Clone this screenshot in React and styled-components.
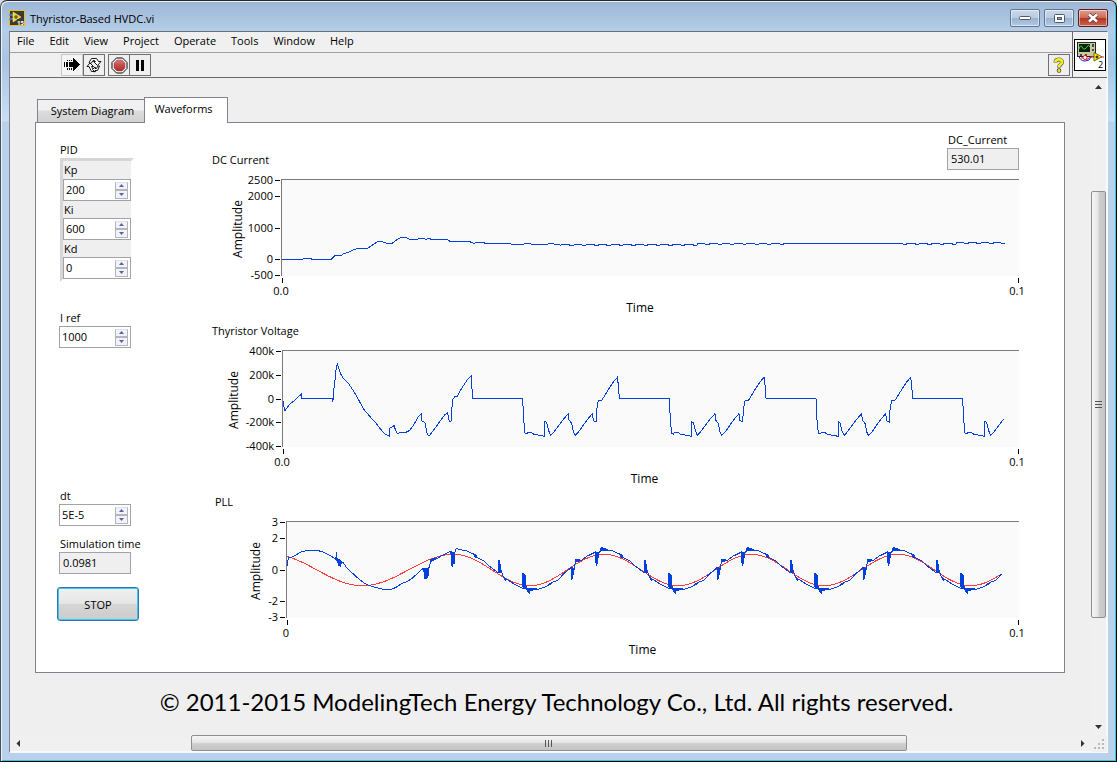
import React, { useState } from 'react';
import styled, { createGlobalStyle } from 'styled-components';

const GlobalStyle = createGlobalStyle`
  * {
    box-sizing: border-box;
  }

  body {
    margin: 0;
    background: #d5dbe2;
    color: #000;
    font-family: 'Open Sans', 'Noto Sans', sans-serif;
    font-size: 11px;
    line-height: 17px;
  }

  button, input {
    font: inherit;
    color: inherit;
    margin: 0;
    padding: 0;
  }
`;

const Window = styled.div`
  display: flex;
  flex-direction: column;
  min-height: 100vh;
  padding: 0 8px 8px;
  border: 1px solid #000;
  border-left-color: #4a5058;
  border-top-color: #23282e;
  border-radius: 7px 7px 0 0;
  background: linear-gradient(#9db6d4, #b4cde8 30px, #a9c4e2 60px, #c9dff5 120px, #b9d1ea 121px);
  box-shadow: inset 1px 1px 0 #eaf3fb, inset -1px -1px 0 #2fc9e4;
`;

const TitleBar = styled.header`
  display: flex;
  align-items: center;
  gap: 4px;
  height: 30px;
  padding-top: 4px;
`;

const Title = styled.h1`
  flex: 1;
  margin: 0;
  padding-left: 1px;
  font-size: 11px;
  font-weight: 400;
`;

const Caption = styled.button`
  display: flex;
  align-items: center;
  justify-content: center;
  width: 30px;
  height: 18px;
  border: 1px solid ${ props => props.$close ? '#5b1f22' : '#5f7590' };
  border-radius: 2px;
  box-shadow: inset 0 0 0 1px rgba(255, 255, 255, .5);
  background: ${ props => props.$close
    ? 'linear-gradient(#dfa090, #cd6a58 48%, #b23421 50%, #c96450)'
    : 'linear-gradient(#c9d8ea, #b9cce2 48%, #98b1cf 50%, #b3cae4)' };
`;

const Client = styled.div`
  flex: 1;
  display: flex;
  flex-direction: column;
  border: 1px solid #f5f9fd;
  border-top-color: #6b6f76;
  border-left-color: #7d848e;
  background: #f0f0f0;
`;

const Header = styled.div`
  display: flex;
  border-bottom: 1px solid #696969;
`;

const Bars = styled.div`
  flex: 1;
`;

const MenuBar = styled.nav`
  display: flex;
  gap: 15px;
  height: 21px;
  padding-left: 7px;
  border-bottom: 1px solid #a0a0a0;
`;

const MenuLink = styled.a`
  color: #000;
  line-height: 18px;
  text-decoration: none;
`;

const Toolbar = styled.div`
  display: flex;
  align-items: center;
  height: 24px;
  padding: 0 2px 0 51px;
`;

const ToolButton = styled.button`
  display: flex;
  align-items: center;
  justify-content: center;
  width: 22px;
  height: 22px;
  margin-left: ${ props => props.$gap || '0' };
  border: 1px solid ${ props => props.$flat ? '#c8c8c8' : '#707070' };
  background: ${ props => props.$flat ? '#f4f4f4' : '#efefef' };

  & + & {
    border-left-color: #707070;
  }
`;

const ViIcon = styled.div`
  display: flex;
  align-items: center;
  justify-content: center;
  width: 35px;
  border-left: 1px solid #696969;
`;

const Body = styled.div`
  flex: 1;
  display: grid;
  grid-template-columns: minmax(0, 1fr) 16px;
  grid-template-rows: 1fr 17px;
`;

const Canvas = styled.main`
  padding: 19px 26px 10px 25px;
  background: #efefef;
`;

const Tabs = styled.div`
  display: flex;
  align-items: flex-end;
  padding-left: 2px;
`;

const Tab = styled.button`
  z-index: ${ props => props.$active ? 1 : 0 };
  height: ${ props => props.$active ? '26px' : '23px' };
  width: ${ props => props.$active ? '84px' : '108px' };
  margin-bottom: ${ props => props.$active ? '-1px' : '0' };
  margin-left: ${ props => props.$active ? '-1px' : '0' };
  padding: ${ props => props.$active ? '0 5px 4px 0' : '0 0 1px 3px' };
  border: 1px solid #82828c;
  border-bottom: 0;
  background: ${ props => props.$active ? '#fff' : 'linear-gradient(#f0f0f0 45%, #dcdcdc 50%, #d2d2d2)' };
`;

const Panel = styled.section`
  display: flex;
  border: 1px solid #82828c;
  padding: 8px 45px 8px 23px;
  background: #fff;
`;

const Controls = styled.div`
  display: flex;
  flex-direction: column;
  flex: 0 0 153px;
  align-items: flex-start;
  padding: 10px 0 43px;
`;

const Group = styled.div`
  display: flex;
  flex-direction: column;
  align-items: flex-start;
  margin-top: ${ props => props.$top || '0' };
`;

const Label = styled.label`
  height: 17px;
  padding-left: 1px;
`;

const Cluster = styled.fieldset`
  margin: 0;
  padding: 0;
  border: 0;

  legend {
    padding: 0 0 0 1px;
  }
`;

const ClusterFrame = styled.div`
  display: flex;
  flex-direction: column;
  width: 74px;
  margin-left: 1px;
  border: 3px solid #d6d6d8;
  border-right-color: transparent;
  border-bottom-color: transparent;
  background: #efefef padding-box;

  > label:first-child {
    height: 18px;
  }
`;

const Field = styled.div`
  display: flex;
  align-items: center;
  width: ${ props => props.$narrow ? '68px' : '72px' };
  height: 22px;
  padding: ${ props => props.$readOnly ? '0 2px 0 3px' : '0 2px' };
  border: 1px solid #a2a2ab;
  background: ${ props => props.$readOnly ? '#efefef' : '#fff' };

  input {
    flex: 1;
    min-width: 0;
    height: 18px;
    padding-bottom: 1px;
    border: 0;
    outline: 0;
    background: transparent;
  }
`;

const Spinner = styled.div`
  display: flex;
  flex-direction: column;

  button {
    display: flex;
    align-items: center;
    justify-content: center;
    width: 13px;
    height: 8px;
    border: 1px solid #b4b4bc;
    border-top-color: #e2e2e6;
    background: #f3f3f5;
  }

  button + button {
    height: 9px;
    border-color: #b4b4bc;
  }
`;

const StopButton = styled.button`
  width: 82px;
  height: 34px;
  margin: 13px 0 0 -2px;
  border: 1px solid #2c78a8;
  border-radius: 3px;
  box-shadow: inset 0 0 0 1px #41c5ee;
  background: linear-gradient(#f0f0f0, #e6e6e6 48%, #d6d6d6 50%, #cbcbcb);
`;

const Charts = styled.div`
  flex: 1;
  min-width: 0;
`;

const ChartHeader = styled.div`
  display: flex;
  align-items: flex-end;
  justify-content: space-between;
  margin-bottom: 9px;
  padding-left: ${ props => props.$indent || '0' };
`;

const ChartTitle = styled.h2`
  margin: 0;
  padding-bottom: 2px;
  font-size: 11px;
  font-weight: 400;
`;

const ChartArea = styled.div`
  height: 143px;
  padding-left: ${ props => props.$axis };

  > svg {
    display: block;
    width: 100%;
    height: 100%;
    overflow: visible;
  }
`;

const Copyright = styled.p`
  margin: 14px 0 0;
  padding-left: 13px;
  font-family: Lato, 'Open Sans', sans-serif;
  font-size: 24px;
  line-height: 30px;
  text-align: center;
  white-space: nowrap;
`;

const ScrollBar = styled.div`
  display: flex;
  flex-direction: ${ props => props.$vertical ? 'column' : 'row' };
  background: #f0f0f0;
  border-right: ${ props => props.$vertical ? '1px solid #fafafa' : '0' };
  border-bottom: ${ props => props.$vertical ? '0' : '1px solid #fafafa' };
`;

const ScrollButton = styled.button`
  display: flex;
  align-items: center;
  justify-content: center;
  flex: 0 0 17px;
  border: 0;
  background: transparent;
`;

const Track = styled.div`
  flex: ${ props => props.$size } 1 0;
`;

const Thumb = styled.div`
  display: flex;
  align-items: center;
  justify-content: center;
  flex: ${ props => props.$size } 1 0;
  border: 1px solid #8f8f8f;
  border-radius: 2px;
  background: linear-gradient(${ props => props.$vertical ? '90deg' : '180deg' }, #f6f6f6, #e6e6e6 45%, #cfcfcf 55%, #c4c4c6);
`;

const Grip = styled.div`
  display: flex;
  align-items: center;
  justify-content: center;
`;

// Traces are sampled at three units to the pixel.
const DC_START = [
  [246, 358], [308, 358], [312, 355], [333, 355], [335, 358], [394, 358], [404, 347], [424, 346],
  [430, 341], [448, 336], [462, 329], [475, 325], [503, 325], [520, 313], [532, 306], [544, 304],
  [562, 310], [578, 309], [595, 296], [605, 292], [615, 292], [630, 298], [652, 298], [658, 295],
  [672, 295], [678, 298], [684, 295], [695, 298], [740, 298], [750, 304], [806, 304], [823, 310],
  [830, 307], [850, 307], [855, 310], [930, 310], [934, 313], [970, 313], [975, 310], [990, 310],
  [995, 313], [1042, 313], [1048, 310], [1060, 310], [1064, 313], [1075, 313], [1082, 316],
];

const THYRISTOR_START = [
  [250, 243], [251, 258], [255, 272], [262, 262], [270, 252], [285, 240], [300, 226], [305, 221],
  [305, 235], [397, 235], [397, 247], [400, 235], [402, 205], [405, 180], [408, 150], [412, 130],
  [416, 145], [422, 162], [430, 175], [445, 190], [460, 212], [475, 238], [490, 266], [510, 290],
  [530, 312], [550, 338], [560, 345], [568, 349], [569, 325], [575, 322], [583, 316], [586, 330],
  [592, 340], [600, 338], [615, 338], [628, 332], [640, 316], [655, 290], [664, 281], [666, 303],
  [675, 308], [680, 335], [684, 346], [690, 345], [705, 325], [720, 303], [735, 284], [743, 278],
  [748, 305], [754, 303], [756, 260], [759, 238], [765, 229], [772, 229], [785, 205], [800, 182],
  [814, 167], [815, 190],
];

const THYRISTOR_CYCLE = [
  [818, 235], [968, 235], [971, 300], [975, 340], [980, 342], [985, 336], [992, 336], [1002, 343],
  [1020, 346], [1034, 349], [1034, 304], [1040, 308], [1046, 332], [1052, 346], [1060, 338],
  [1075, 318], [1090, 298], [1105, 281], [1107, 300], [1115, 310], [1120, 335], [1125, 346],
  [1135, 337], [1150, 315], [1165, 295], [1177, 281], [1180, 302], [1188, 306], [1190, 270],
  [1195, 242], [1206, 240], [1225, 209], [1240, 186], [1252, 172], [1255, 195],
];

const PLL_START = [
  [262, 228], [263, 215], [266, 203], [275, 202], [285, 197], [300, 187], [318, 182], [340, 180],
  [355, 182], [372, 187], [390, 196], [407, 207], [415, 214], [430, 218], [440, 233], [460, 252],
  [480, 270], [500, 284], [515, 289], [540, 296], [560, 299], [575, 298], [590, 291], [605, 281],
  [620, 275], [635, 266], [655, 248], [667, 236], [687, 234], [693, 208], [700, 211], [715, 203],
  [730, 194], [750, 184], [764, 190],
];

const PLL_CYCLE = [
  [766, 180], [769, 175], [778, 178], [800, 183], [820, 192], [833, 204], [850, 212], [870, 230],
  [893, 247], [905, 247], [910, 260], [918, 267], [926, 271], [945, 284], [967, 294], [979, 294],
  [984, 306], [995, 300], [1016, 297], [1030, 293], [1042, 287], [1060, 276], [1075, 270],
  [1090, 252], [1113, 233], [1123, 235], [1127, 211], [1137, 211], [1144, 211], [1160, 199],
  [1187, 186], [1197, 188],
];

// Commutation notches, dense enough to read as solid areas.
const PLL_START_NOTCHES = [
  'M406 208L408 184L411 186L411 205L420 208L428 216L424 222L422 230L415 228L412 216Z',
  'M666 236L688 232L686 258L680 266L674 270L671 246Z',
  'M690 206L700 205L710 202L710 208L692 216Z',
  'M750 184L766 188L765 221L759 224L758 230L753 229L753 200Z',
];

const PLL_NOTCHES = [
  'M818 190L828 192L833 203L826 204Z',
  'M893 247L894 210L900 212L906 248Z',
  'M908 260L914 266L926 270L914 272Z',
  'M966 292L967 249L972 250L977 256L980 294L1008 293L1016 298L992 303L989 311L983 308L978 296Z',
  'M1038 288L1048 279L1062 275L1054 284Z',
  'M1112 233L1125 234L1121 250L1119 266L1114 269Z',
  'M1126 208L1140 208L1142 213L1127 217Z',
  'M1185 184L1198 187L1194 215L1191 229L1187 230Z',
  'M1200 186L1202 171L1209 172L1226 179L1224 184L1208 182Z',
];

const PHASE_TURNS = [215, 487, 762, 990, 1212, 1435, 1655, 1872, 2095, 2312, 2532];

function repeat(cycle, period, end) {
  const points = [];
  for (let shift = 0; shift < end; shift += period) {
    cycle.forEach(([x, y]) => {
      if (x + shift <= end) {
        points.push([x + shift, y]);
      }
    });
  }
  return points;
}

function dcTrace() {
  const points = [...DC_START];
  for (let x = 1086; x < 2410; x += 37) {
    const level = Math.round(313 - (x - 1086) / 260);
    const dip = x < 1500 || x > 2080 ? 3 : 1;
    points.push([x, level], [x + 22, level], [x + 24, level + dip], [x + 35, level + dip]);
  }
  return points;
}

function phaseTrace() {
  const points = [];
  for (let x = 262; x <= 2405; x += 6) {
    const i = PHASE_TURNS.findIndex(turn => turn > x) - 1;
    const part = (x - PHASE_TURNS[i]) / (PHASE_TURNS[i + 1] - PHASE_TURNS[i]);
    const sign = i % 2 === 0 ? 1 : -1;
    points.push([x, 240 - sign * 47 * Math.cos(part * Math.PI)]);
  }
  return points;
}

const BLUE = '#0040dc';
const RED = '#ff3b3b';

const CHARTS = [
  {
    title: 'DC Current',
    axis: '69px',
    labelX: -39,
    timeShift: -10,
    zero: '0.0',
    viewBox: '243 117 2214 291',
    ticks: [['2500', 1], ['2000', 17], ['1000', 49], ['0', 80], ['-500', 96]],
    traces: [{ color: BLUE, points: dcTrace() }],
  },
  {
    title: 'Thyristor Voltage',
    axis: '70px',
    labelX: -44,
    timeShift: -6,
    zero: '0.0',
    viewBox: '246 90 2211 291',
    ticks: [['400k', 1], ['200k', 25], ['0', 49], ['-200k', 72], ['-400k', 96]],
    traces: [{ color: BLUE, points: [...THYRISTOR_START, ...repeat(THYRISTOR_CYCLE, 440, 2411)] }],
  },
  {
    title: 'PLL',
    indent: '3px',
    axis: '74px',
    labelX: -26,
    timeShift: -10,
    zero: '0',
    viewBox: '258 93 2199 291',
    ticks: [['3', 1], ['2', 17], ['0', 49], ['-2', 80], ['-3', 96]],
    traces: [
      { color: RED, points: phaseTrace() },
      { color: BLUE, points: [...PLL_START, ...repeat(PLL_CYCLE, 438, 2405)] },
    ],
    notches: true,
  },
];

function Notches() {
  return (
    <g fill={ BLUE } shapeRendering="crispEdges">
      <path d={ PLL_START_NOTCHES.join('') } />
      { [0, 438, 876].map(shift => (
        <path key={ shift } d={ PLL_NOTCHES.join('') } transform={ `translate(${ shift })` } />
      )) }
      <path d={ PLL_NOTCHES.slice(0, 5).join('') } transform="translate(1314)" />
    </g>
  );
}

function Plot({ chart }) {
  return (
    <svg role="img" aria-label={ chart.title } fontSize="11">
      <rect width="100%" height="97" fill="#fafafa" />
      <svg width="100%" height="97" viewBox={ chart.viewBox } preserveAspectRatio="none">
        { chart.traces.map(trace => (
          <polyline
            key={ trace.color }
            points={ trace.points.map(p => p.join(',')).join(' ') }
            fill="none"
            stroke={ trace.color }
            strokeWidth="1"
            vectorEffect="non-scaling-stroke"
            shapeRendering="crispEdges"
          />
        )) }
        { chart.notches && <Notches /> }
      </svg>
      <rect width="100%" height="1" fill="#7a7a7a" />
      <rect width="1" height="97" fill="#7a7a7a" />
      { chart.ticks.map(([text, y]) => (
        <g key={ text }>
          <rect x="-6" y={ y } width="5" height="1" />
          <text x="-8" y={ y + 4 } textAnchor="end">{ text }</text>
        </g>
      )) }
      <text fontSize="12" textAnchor="middle" transform={ `translate(${ chart.labelX } 50) rotate(-90)` }>Amplitude</text>
      <rect x="1" y="99" width="1" height="5" />
      <text x="0" y="116" textAnchor="middle">{ chart.zero }</text>
      <svg x="100%" overflow="visible">
        <rect x="-1" y="99" width="1" height="5" />
        <text x="-2" y="116" textAnchor="middle">0.1</text>
      </svg>
      <text x="50%" dx={ chart.timeShift } y="133" fontSize="12" textAnchor="middle">Time</text>
    </svg>
  );
}

function NumericControl({ id, label, value, narrow }) {
  const [text, setText] = useState(value);
  const step = amount => setText(String(Number(text) + amount));

  return (
    <>
      <Label htmlFor={ id }>{ label }</Label>
      <Field $narrow={ narrow }>
        <input id={ id } value={ text } onChange={ e => setText(e.target.value) } />
        <Spinner>
          <button type="button" aria-label={ `Increase ${ label }` } onClick={ () => step(1) }>
            <svg width="5" height="3"><path d="M2.5 0 5 3H0z" fill="#5064b4" /></svg>
          </button>
          <button type="button" aria-label={ `Decrease ${ label }` } onClick={ () => step(-1) }>
            <svg width="5" height="3"><path d="M0 0h5L2.5 3z" fill="#5064b4" /></svg>
          </button>
        </Spinner>
      </Field>
    </>
  );
}

function Indicator({ id, label, value }) {
  return (
    <Group>
      <Label htmlFor={ id }>{ label }</Label>
      <Field $readOnly>
        <input id={ id } value={ value } readOnly />
      </Field>
    </Group>
  );
}

function AppIcon() {
  return (
    <svg width="16" height="16" viewBox="0 0 16 16">
      <rect x=".5" y=".5" width="15" height="15" fill="#3a3a34" stroke="#f5b81e" />
      <path d="M0 5h4M0 9h4" stroke="#3f8fd0" strokeWidth="1.5" />
      <path d="M4 2v10l8-5z" fill="#f7cf2d" stroke="#fff1a0" strokeWidth=".5" />
      <path d="M5 7h4M7 5v4" stroke="#4a3c00" />
      <rect x="8" y="9" width="7" height="6" fill="#3a3a34" />
      <text x="8" y="15" fontSize="6" fontWeight="700" fill="#fff">15</text>
    </svg>
  );
}

function RunIcon() {
  return (
    <svg width="16" height="14" viewBox="0 0 16 14" shapeRendering="crispEdges">
      <path d="M5 4h4V0h1l6 6.5-6 6.500H9V9H5z" />
      <path d="M0 4h1v5H0zM2 4h2v5H2zM3 2h1v1H3zM5 2h1v1H5zM7 2h1v1H7zM3 10h1v2H3zM5 10h1v2H5zM7 10h1v2H7z" />
    </svg>
  );
}

function RunContinuousIcon() {
  return (
    <svg width="16" height="16" viewBox="0 0 16 16" fill="#fff" stroke="#000" strokeWidth=".9" strokeLinejoin="round">
      <path d="M3 5.500 5.500 1.500h5l2 3h2.500l-3.500 4-4-4h2L8.500 3.500H7L5 6.500z" />
      <path d="M1 9.500l3-3.500 3.500 3.500H5.500L7 12h3l-1-1.500v4.500l-1-.5H5.500L3 9.500z" />
      <path d="M13.500 9 11.500 13.500H9v1.500L6.500 12.500 9 10v1.500h1.500L12 9z" />
    </svg>
  );
}

function AbortIcon() {
  return (
    <svg width="17" height="17" viewBox="0 0 17 17">
      <defs>
        <linearGradient id="abort" x2="0" y2="1">
          <stop offset="0" stopColor="#dc7878" />
          <stop offset=".5" stopColor="#c84848" />
          <stop offset="1" stopColor="#a83030" />
        </linearGradient>
      </defs>
      <path d="M5.500 1h6l4.500 4.500v6L11.500 16h-6L1 11.500v-6z" fill="#fff" stroke="#000" />
      <path d="M6 3h5l3 3v5l-3 3H6l-3-3V6z" fill="url(#abort)" stroke="#8c3c3c" strokeWidth=".5" />
    </svg>
  );
}

function PauseIcon() {
  return (
    <svg width="10" height="11" viewBox="0 0 10 11">
      <path d="M1 0h3v11H1zM6 0h3v11H6z" />
    </svg>
  );
}

function HelpIcon() {
  return (
    <svg width="12" height="16" viewBox="0 0 12 16" fill="none">
      <path d="M2.500 5.500C2.500 1.500 9 1.500 9 5c0 2.500-3 2.500-3 5.500" stroke="#555" strokeWidth="4" />
      <circle cx="6" cy="13.500" r="2.200" fill="#333" />
      <path d="M2.500 5C2.500 1.500 9 1.500 9 5c0 2.500-3 2.500-3 5" stroke="#f5ee12" strokeWidth="2.800" />
      <circle cx="6" cy="13.500" r="1.500" fill="#f5ee12" />
    </svg>
  );
}

function InstrumentIcon() {
  return (
    <svg width="32" height="32" viewBox="0 0 32 32">
      <rect x=".5" y=".5" width="31" height="31" fill="#fff" stroke="#000" />
      <rect x="3.500" y="3.500" width="18" height="14" fill="#cbc8a4" stroke="#222" />
      <rect x="5" y="5" width="11" height="8" fill="#06200a" />
      <path d="M5 10q1.500-5 3-2t3 2 2.500-3 2.500 1" fill="none" stroke="#28d848" />
      <path d="M18 5h2v3h-2zM18 10h2v2h-2zM6 15h2v2H6zM11 15h2v2h-2z" fill="#4a4a3a" />
      <path d="M5 17q1 5 6 5t6-4h3" fill="none" stroke="#2020d0" />
      <path d="M7 19q3-1 4 1t4-1 5-1M26 18h4" fill="none" stroke="#e01818" />
      <circle cx="11" cy="18.500" r="2" fill="#fff" stroke="#e01818" />
      <path d="M20 13.500v8.500l8-4.200z" fill="#f8ec20" stroke="#7a6c00" />
      <path d="M21.500 18h3M23 16.500v3" stroke="#000" />
      <text x="24" y="29" fontSize="9">2</text>
    </svg>
  );
}

const ARROWS = {
  up: 'M3.500 2 7 6H0z',
  down: 'M0 2h7L3.500 6z',
  left: 'M5 0v7L1.500 3.500z',
  right: 'M2 0v7l3.500-3.500z',
};

function ScrollArrow({ direction }) {
  return (
    <ScrollButton type="button" aria-label={ `Scroll ${ direction }` }>
      <svg width="7" height="7"><path d={ ARROWS[direction] } fill="#333" /></svg>
    </ScrollButton>
  );
}

const MENUS = ['File', 'Edit', 'View', 'Project', 'Operate', 'Tools', 'Window', 'Help'];

export default function App() {
  return (
    <Window>
      <GlobalStyle />
      <TitleBar>
        <AppIcon />
        <Title>Thyristor-Based HVDC.vi</Title>
        <Caption type="button" aria-label="Minimize">
          <svg width="12" height="6"><rect x=".5" y="1.500" width="11" height="3" rx="1" fill="#fff" stroke="#4e5a6a" /></svg>
        </Caption>
        <Caption type="button" aria-label="Maximize">
          <svg width="11" height="9">
            <rect x=".5" y=".5" width="10" height="8" rx="1" fill="#fff" stroke="#4e5a6a" />
            <rect x="3.500" y="3.500" width="4" height="2" fill="#8fa8c6" stroke="#4e5a6a" />
          </svg>
        </Caption>
        <Caption type="button" aria-label="Close" $close>
          <svg width="12" height="10" fill="none">
            <path d="M2 1.500l8 7M10 1.500l-8 7" stroke="#5a3a40" strokeWidth="4" />
            <path d="M2 1.500l8 7M10 1.500l-8 7" stroke="#fff" strokeWidth="2.500" />
          </svg>
        </Caption>
      </TitleBar>

      <Client>
        <Header>
          <Bars>
            <MenuBar>
              { MENUS.map(menu => <MenuLink key={ menu } href="#">{ menu }</MenuLink>) }
            </MenuBar>
            <Toolbar>
              <ToolButton type="button" aria-label="Run" $flat><RunIcon /></ToolButton>
              <ToolButton type="button" aria-label="Run continuously"><RunContinuousIcon /></ToolButton>
              <ToolButton type="button" aria-label="Abort" $gap="3px"><AbortIcon /></ToolButton>
              <ToolButton type="button" aria-label="Pause" $gap="-1px"><PauseIcon /></ToolButton>
              <ToolButton type="button" aria-label="Context help" $gap="auto"><HelpIcon /></ToolButton>
            </Toolbar>
          </Bars>
          <ViIcon><InstrumentIcon /></ViIcon>
        </Header>

        <Body>
          <Canvas>
            <Tabs role="tablist">
              <Tab type="button" role="tab" aria-selected="false">System Diagram</Tab>
              <Tab type="button" role="tab" aria-selected="true" $active>Waveforms</Tab>
            </Tabs>
            <Panel>
              <Controls>
                <Cluster>
                  <legend>PID</legend>
                  <ClusterFrame>
                    <NumericControl id="kp" label="Kp" value="200" narrow />
                    <NumericControl id="ki" label="Ki" value="600" narrow />
                    <NumericControl id="kd" label="Kd" value="0" narrow />
                  </ClusterFrame>
                </Cluster>
                <Group $top="27px">
                  <NumericControl id="iref" label="I ref" value="1000" />
                </Group>
                <Group $top="auto">
                  <NumericControl id="dt" label="dt" value="5E-5" />
                </Group>
                <Group $top="9px">
                  <Indicator id="sim-time" label="Simulation time" value="0.0981" />
                </Group>
                <StopButton type="button">STOP</StopButton>
              </Controls>
              <Charts>
                { CHARTS.map((chart, i) => (
                  <div key={ chart.title }>
                    <ChartHeader $indent={ chart.indent }>
                      <ChartTitle>{ chart.title }</ChartTitle>
                      { i === 0 && <Indicator id="dc-current" label="DC_Current" value="530.01" /> }
                    </ChartHeader>
                    <ChartArea $axis={ chart.axis }>
                      <Plot chart={ chart } />
                    </ChartArea>
                  </div>
                )) }
              </Charts>
            </Panel>
            <Copyright>© 2011-2015 ModelingTech Energy Technology Co., Ltd. All rights reserved.</Copyright>
          </Canvas>

          <ScrollBar $vertical>
            <ScrollArrow direction="up" />
            <Track $size={ 96 } />
            <Thumb $size={ 427 } $vertical>
              <svg width="7" height="8"><path d="M0 .5h7M0 3.500h7M0 6.500h7" stroke="#555" /></svg>
            </Thumb>
            <Track $size={ 100 } />
            <ScrollArrow direction="down" />
          </ScrollBar>

          <ScrollBar>
            <ScrollArrow direction="left" />
            <Track $size={ 164 } />
            <Thumb $size={ 716 }>
              <svg width="8" height="7"><path d="M.5 0v7M3.500 0v7M6.500 0v7" stroke="#555" /></svg>
            </Thumb>
            <Track $size={ 167 } />
            <ScrollArrow direction="right" />
          </ScrollBar>

          <Grip>
            <svg width="10" height="10" fill="#b8b8b8">
              <path d="M8 0h2v2H8zM4 4h2v2H4zM8 4h2v2H8zM0 8h2v2H0zM4 8h2v2H4zM8 8h2v2H8z" />
            </svg>
          </Grip>
        </Body>
      </Client>
    </Window>
  );
}
